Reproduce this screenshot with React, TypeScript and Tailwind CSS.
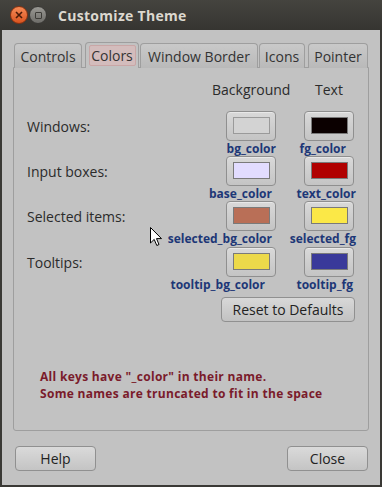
import React from "react";

const Swatch = ({ color, border }: { color: string; border?: string }) => (
  <div className="w-[50px] h-[30px] rounded-[4px] border border-[#8f8f8f] bg-gradient-to-b from-[#d9d9d9] to-[#c4c4c4] shadow-[inset_0_1px_0_#e8e8e8] flex items-center justify-center pb-[1px]">
    <div
      className={`w-[37px] h-[17px] border ${border ?? "border-[#7a7a7a]"}`}
      style={{ backgroundColor: color }}
    />
  </div>
);

const KeyLabel = ({ text, pr }: { text: string; pr: string }) => (
  <div className={`flex justify-end whitespace-nowrap h-[15px] leading-[15px] text-[12px] font-bold text-[#1d3777] ${pr}`}>
    {text}
  </div>
);

export default function App() {
  const tabBase =
    "h-[25px] rounded-t-[4px] border border-b-0 border-[#9e9e9e] bg-gradient-to-b from-[#c9c9c9] to-[#b9b9b9] flex items-center justify-center text-[14px] text-[#333]";
  return (
    <div className="w-[382px] h-[487px] bg-[#3a3935] flex flex-col font-['Open_Sans',sans-serif] relative overflow-hidden">
      {/* title bar */}
      <div className="h-[30px] flex items-center bg-gradient-to-b from-[#45443f] to-[#363531] shrink-0">
        <div className="ml-[10px] w-[18px] h-[18px] rounded-full bg-gradient-to-b from-[#f58a55] to-[#d9531e] border border-[#8a3210] flex items-center justify-center">
          <svg width="8" height="8" viewBox="0 0 8 8">
            <path d="M1 1 L7 7 M7 1 L1 7" stroke="#4a1a08" strokeWidth="1.6" />
          </svg>
        </div>
        <div className="ml-[1px] w-[18px] h-[18px] rounded-full bg-gradient-to-b from-[#9a9994] to-[#6e6d69] border border-[#3a3936] flex items-center justify-center">
          <div className="w-[7px] h-[7px] border border-[#3d3c38] rounded-[1px]" />
        </div>
        <div className="ml-[11px] text-[14px] font-bold text-[#dcd8cf] tracking-[0.3px]">Customize Theme</div>
      </div>

      {/* body */}
      <div className="flex-1 mx-[2px] mb-[2px] bg-[#c2c2c2] flex flex-col px-[11px]">
        {/* tabs */}
        <div className="flex items-end mt-[12px] h-[26px] relative z-10">
          <div className={`${tabBase} ml-[1px] w-[68px]`}>Controls</div>
          <div className="ml-[3px] w-[54px] h-[26px] rounded-t-[4px] border border-b-0 border-[#9e9e9e] bg-[#c2c2c2] flex items-center justify-center">
            <div className="w-[47px] h-[21px] rounded-[2px] border border-[#c9a6a6] bg-[#d3bcbc] flex items-center justify-center text-[14px] text-[#333]">
              Colors
            </div>
          </div>
          <div className={`${tabBase} ml-[1px] w-[118px]`}>Window Border</div>
          <div className={`${tabBase} ml-[1px] w-[46px]`}>Icons</div>
          <div className={`${tabBase} ml-[3px] w-[60px]`}>Pointer</div>
        </div>

        {/* notebook */}
        <div className="h-[364px] border border-[#9e9e9e] rounded-b-[3px] -mt-[1px] flex flex-col">
          <div className="grid grid-cols-[185px_78px_78px] pl-[13px] mt-[11px] h-[20px] items-center text-[14px] text-[#2b2b2b]">
            <div />
            <div className="text-center">Background</div>
            <div className="text-center">Text</div>
          </div>

          <div className="mt-[12px] flex flex-col">
            {/* Windows */}
            <div className="grid grid-cols-[185px_78px_78px] pl-[13px]">
              <div className="h-[30px] flex items-center text-[14px] text-[#2b2b2b]">Windows:</div>
              <div className="flex justify-center"><Swatch color="#d3d3d3" border="border-[#9a9a9a]" /></div>
              <div className="flex justify-center"><Swatch color="#0b0000" /></div>
              <div />
              <KeyLabel text="bg_color" pr="pr-[14px]" />
              <KeyLabel text="fg_color" pr="pr-[22px]" />
            </div>
            {/* Input boxes */}
            <div className="grid grid-cols-[185px_78px_78px] pl-[13px]">
              <div className="h-[30px] flex items-center text-[14px] text-[#2b2b2b]">Input boxes:</div>
              <div className="flex justify-center"><Swatch color="#e2dcff" /></div>
              <div className="flex justify-center"><Swatch color="#b00000" /></div>
              <div />
              <KeyLabel text="base_color" pr="pr-[18px]" />
              <KeyLabel text="text_color" pr="pr-[12px]" />
            </div>
            {/* Selected items */}
            <div className="grid grid-cols-[185px_78px_78px] pl-[13px]">
              <div className="h-[30px] flex items-center text-[14px] text-[#2b2b2b]">Selected items:</div>
              <div className="flex justify-center"><Swatch color="#b96f57" /></div>
              <div className="flex justify-center"><Swatch color="#fbe847" /></div>
              <div />
              <KeyLabel text="selected_bg_color" pr="pr-[18px]" />
              <KeyLabel text="selected_fg" pr="pr-[12px]" />
            </div>
            {/* Tooltips */}
            <div className="grid grid-cols-[185px_78px_78px] pl-[13px] mt-[1px]">
              <div className="h-[30px] flex items-center text-[14px] text-[#2b2b2b]">Tooltips:</div>
              <div className="flex justify-center"><Swatch color="#ecd94a" /></div>
              <div className="flex justify-center"><Swatch color="#39399a" /></div>
              <div />
              <KeyLabel text="tooltip_bg_color" pr="pr-[25px]" />
              <KeyLabel text="tooltip_fg" pr="pr-[15px]" />
            </div>
          </div>

          <div className="flex justify-end pr-[13px] mt-[5px]">
            <button className="w-[134px] h-[25px] rounded-[4px] border border-[#909090] bg-gradient-to-b from-[#d8d8d8] to-[#c2c2c2] text-[14px] text-[#222] flex items-center justify-center">
              Reset to Defaults
            </button>
          </div>

          <div className="pl-[26px] mt-[47px] text-[12px] leading-[16.5px] font-bold tracking-[0.3px] text-[#7a1b2b]">
            <div>All keys have "_color" in their name.</div>
            <div>Some names are truncated to fit in the space</div>
          </div>
        </div>

        {/* bottom buttons */}
        <div className="flex justify-between mt-[15px] pl-[2px] pr-[1px]">
          <button className="w-[81px] h-[25px] rounded-[4px] border border-[#909090] bg-gradient-to-b from-[#dadada] to-[#c4c4c4] text-[14px] text-[#222] flex items-center justify-center">
            Help
          </button>
          <button className="w-[81px] h-[25px] rounded-[4px] border border-[#909090] bg-gradient-to-b from-[#dadada] to-[#c4c4c4] text-[14px] text-[#222] flex items-center justify-center">
            Close
          </button>
        </div>
      </div>

      {/* mouse cursor */}
      <svg className="absolute left-[150px] top-[227px]" width="13" height="20" viewBox="0 0 13 20">
        <path d="M0.5 0.5 L0.5 16 L4.2 12.4 L6.8 18.5 L9 17.5 L6.5 11.6 L11.5 11.6 Z" fill="#fff" stroke="#000" strokeWidth="1" strokeLinejoin="round" />
      </svg>
    </div>
  );
}
